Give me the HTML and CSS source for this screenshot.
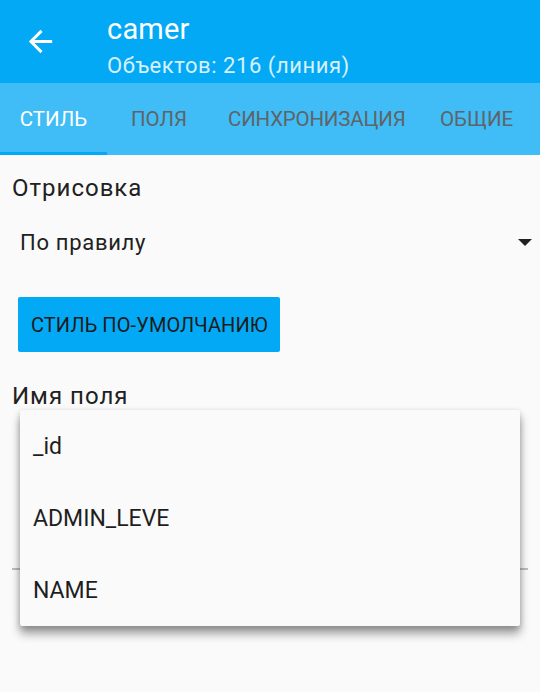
FILE: index.html
```html
<!DOCTYPE html>
<html lang="ru">
<head>
<meta charset="utf-8">
<link rel="stylesheet" href="styles.css">
</head>
<body>
<div class="screen">
  <header class="appbar">
    <div class="back">
      <svg width="35" height="35" viewBox="0 0 24 24"><path fill="#ffffff" d="M20 11H7.83l5.59-5.59L12 4l-8 8 8 8 1.41-1.41L7.83 13H20v-2z"/></svg>
    </div>
    <div class="titles">
      <div class="title">camer</div>
      <div class="subtitle">Объектов: 216 (линия)</div>
    </div>
  </header>
  <nav class="tabs">
    <div class="tab active">СТИЛЬ</div>
    <div class="tab">ПОЛЯ</div>
    <div class="tab">СИНХРОНИЗАЦИЯ</div>
    <div class="tab">ОБЩИЕ</div>
  </nav>
  <main class="content">
    <div class="label">Отрисовка</div>
    <div class="spinner">
      <span>По правилу</span>
      <span class="caret"></span>
    </div>
    <div class="btnrow"><div class="button">СТИЛЬ ПО-УМОЛЧАНИЮ</div></div>
    <div class="label label2">Имя поля</div>
    <div class="field">
      <div class="underline"></div>
      <div class="popup">
        <div class="item">_id</div>
        <div class="item">ADMIN_LEVE</div>
        <div class="item">NAME</div>
      </div>
    </div>
  </main>
</div>
</body>
</html>
```
FILE: styles.css
```css
html, body {
  margin: 0;
  padding: 0;
}
body {
  width: 540px;
  height: 692px;
  overflow: hidden;
  background: #fafafa;
  font-family: Roboto, "Noto Sans", sans-serif;
  color: #212121;
}
.screen {
  width: 540px;
  height: 692px;
  display: flex;
  flex-direction: column;
}
.appbar {
  height: 83px;
  background: #03a9f4;
  display: flex;
  align-items: flex-start;
}
.back {
  width: 107px;
  flex: none;
  padding: 24px 0 0 23px;
  box-sizing: border-box;
}
.back svg { display: block; }
.titles {
  padding-top: 11px;
}
.title {
  font-size: 29px;
  line-height: 36px;
  color: #ffffff;
  letter-spacing: 0.2px;
}
.subtitle {
  font-size: 22px;
  line-height: 30px;
  margin-top: 4px;
  color: #e1f5fe;
  opacity: 0.95;
  letter-spacing: 0.55px;
}
.tabs {
  height: 72px;
  background: #40bdf6;
  display: flex;
  align-items: stretch;
}
.tab {
  display: flex;
  align-items: center;
  justify-content: center;
  font-size: 20.5px;
  color: #5f6468;
  box-sizing: border-box;
  flex: none;
}
.tab:nth-child(1) { width: 107px; }
.tab:nth-child(2) { width: 104px; }
.tab:nth-child(3) { width: 212px; justify-content: flex-start; padding-left: 17px; letter-spacing: -0.2px; }
.tab:nth-child(4) { width: 117px; justify-content: flex-start; padding-left: 17px; }
.tab.active {
  color: #ffffff;
  border-bottom: 3px solid #03a9f4;
  padding-top: 3px;
}
.content {
  flex: 1;
}
.label {
  font-size: 24px;
  line-height: 30px;
  padding: 18px 0 0 12px;
  letter-spacing: 1px;
}
.spinner {
  display: flex;
  align-items: center;
  justify-content: space-between;
  height: 32px;
  margin-top: 23px;
  padding: 0 8px 0 20px;
  font-size: 22px;
  letter-spacing: 0.7px;
}
.caret {
  width: 0;
  height: 0;
  border-left: 7px solid transparent;
  border-right: 7px solid transparent;
  border-top: 7px solid #212121;
}
.btnrow {
  padding: 39px 0 0 18px;
  display: flex;
}
.button {
  background: #03a9f4;
  border-radius: 2px;
  height: 55px;
  width: 262px;
  box-sizing: border-box;
  padding: 0 0 0 13px;
  display: flex;
  align-items: center;
  font-size: 20px;
  letter-spacing: 0.1px;
  color: #1c1c1c;
}
.label2 {
  padding-top: 29px;
}
.field {
  position: relative;
  height: 230px;
}
.underline {
  position: absolute;
  left: 12px;
  top: 157px;
  width: 516px;
  height: 2px;
  background: #bdbdbd;
}
.popup {
  position: absolute;
  left: 20px;
  top: -1px;
  width: 500px;
  background: #fafafa;
  border-radius: 2px;
  box-shadow: 0 8px 10px rgba(0,0,0,0.35), 0 2px 6px rgba(0,0,0,0.2);
}
.item {
  height: 72px;
  display: flex;
  align-items: center;
  padding-left: 13px;
  font-size: 23px;
  color: #1e1e1e;
}
```
